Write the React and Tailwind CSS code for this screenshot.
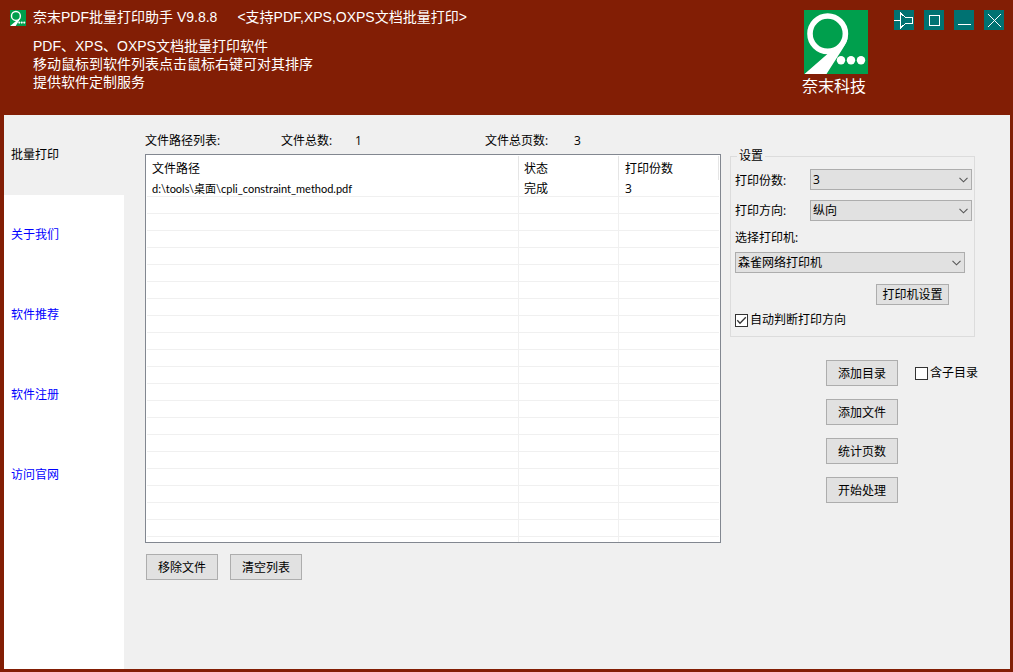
import React, { useState } from 'react';

const navItems = ['批量打印', '关于我们', '软件推荐', '软件注册', '访问官网'];

const files = [
  { path: 'd:\\tools\\桌面\\cpli_constraint_method.pdf', status: '完成', copies: 3 },
];

const ROW_COUNT = 21;

function Logo({ className }) {
  return (
    <svg className={className} viewBox="0 0 64 64" aria-hidden="true">
      <rect width="64" height="64" fill="#009f4d" />
      <circle cx="23.7" cy="23.7" r="17.7" fill="none" stroke="#fff" strokeWidth="5.6" />
      <path d="M0.5 64L24 43.5L35 38L43.8 28C42 34 38 40 34 46L22.5 64Z" fill="#fff" />
      <circle cx="37" cy="50.3" r="4.2" fill="#fff" />
      <circle cx="47" cy="50.3" r="4.2" fill="#fff" />
      <circle cx="57" cy="50.3" r="4.2" fill="#fff" />
    </svg>
  );
}

function WindowButton({ label, children }) {
  return (
    <button type="button" aria-label={label} className="h-5 w-5 bg-[#007272] hover:bg-[#008c8c]">
      <svg className="h-5 w-5" viewBox="0 0 20 20" fill="none" stroke="#fff" shapeRendering="crispEdges">
        {children}
      </svg>
    </button>
  );
}

function Button({ className = 'h-[26px] w-[72px]', children }) {
  return (
    <button type="button" className={`border border-[#adadad] bg-[#e1e1e1] pt-px hover:bg-[#e5f1fb] ${className}`}>
      {children}
    </button>
  );
}

function Select({ id, className, options, value, onChange }) {
  return (
    <div className={`grid items-center ${className}`}>
      <select
        id={id}
        value={value}
        onChange={e => onChange(e.target.value)}
        className="col-start-1 row-start-1 h-[21px] w-full appearance-none rounded-none border border-[#adadad] bg-[#e1e1e1] pt-px pl-[2px] pr-5 leading-4 outline-none"
      >
        {options.map(o => <option key={o} value={o}>{o}</option>)}
      </select>
      <svg className="pointer-events-none col-start-1 row-start-1 mr-1 h-[6px] w-[9px] justify-self-end" viewBox="0 0 9 6" fill="none" stroke="#555" strokeWidth="1.1">
        <path d="M0.5 0.8L4.5 4.8L8.5 0.8" />
      </svg>
    </div>
  );
}

function Checkbox({ label, checked, onChange }) {
  return (
    <label className="flex items-center gap-[2px] whitespace-nowrap leading-4">
      <span className="grid h-[13px] w-[13px] shrink-0">
        <input
          type="checkbox"
          checked={checked}
          onChange={e => onChange(e.target.checked)}
          className="peer col-start-1 row-start-1 h-[13px] w-[13px] appearance-none border border-[#333] bg-white"
        />
        <svg className="pointer-events-none invisible col-start-1 row-start-1 h-[13px] w-[13px] peer-checked:visible" viewBox="0 0 13 13" fill="none" stroke="#333" strokeWidth="1.3">
          <path d="M2.3 6.3L5 9.2L10.8 3.3" />
        </svg>
      </span>
      {label}
    </label>
  );
}

function FileTable() {
  const rows = Array.from({ length: ROW_COUNT }, (_, i) => files[i]);
  return (
    <div className="border border-[#828790] bg-white p-px pb-0">
      <table className="w-full table-fixed border-separate border-spacing-0">
        <colgroup>
          <col />
          <col className="w-[100px]" />
          <col className="w-[100px]" />
        </colgroup>
        <thead>
          <tr className="h-6 text-left">
            <th className="border-r border-[#e5e5e5] p-0 pt-0.5 pl-[5px] font-normal">文件路径</th>
            <th className="border-r border-[#e5e5e5] p-0 pt-0.5 pl-[5px] font-normal">状态</th>
            <th className="border-r border-[#e5e5e5] p-0 pt-0.5 pl-1.5 font-normal">打印份数</th>
          </tr>
        </thead>
        <tbody>
          {rows.map((file, idx) => (
            <tr key={idx} className="h-[17px] leading-[15px]">
              <td className="truncate border-r border-b border-[#f0f0f0] p-0 pt-px pl-[5px] font-['Lato','Noto_Sans_CJK_SC',sans-serif] text-[11px]">{file?.path}</td>
              <td className="border-r border-b border-[#f0f0f0] p-0 pt-px pl-[5px]">{file?.status}</td>
              <td className="border-b border-[#f0f0f0] p-0 pt-px pl-1.5">{file?.copies}</td>
            </tr>
          ))}
          <tr className="h-[5px]">
            <td className="border-r border-[#f0f0f0] p-0"></td>
            <td className="border-r border-[#f0f0f0] p-0"></td>
            <td className="p-0"></td>
          </tr>
        </tbody>
      </table>
    </div>
  );
}

export default function App() {
  const [active, setActive] = useState(navItems[0]);
  const [copies, setCopies] = useState('3');
  const [direction, setDirection] = useState('纵向');
  const [printer, setPrinter] = useState('森雀网络打印机');
  const [autoDirection, setAutoDirection] = useState(true);
  const [subfolders, setSubfolders] = useState(false);

  return (
    <div className="flex min-h-screen flex-col bg-[#821e05] pr-[3px] pb-[3px] pl-1 font-['Open_Sans','Noto_Sans_CJK_SC',sans-serif] text-xs text-black">
      <header className="flex h-[115px] items-start pt-2.5 pr-1.5 pl-1.5 font-['Liberation_Sans','Noto_Sans_CJK_SC',sans-serif] text-sm text-white">
        <Logo className="h-4 w-4 shrink-0" />
        <div className="ml-[7px] flex-1">
          <h1 className="flex gap-5 leading-[14px]">
            <span>奈末PDF批量打印助手 V9.8.8</span>
            <span>&lt;支持PDF,XPS,OXPS文档批量打印&gt;</span>
          </h1>
          <div className="mt-[13px] leading-[18px]">
            <p>PDF、XPS、OXPS文档批量打印软件</p>
            <p>移动鼠标到软件列表点击鼠标右键可对其排序</p>
            <p>提供软件定制服务</p>
          </div>
        </div>
        <div className="mr-[26px] flex w-[66px] flex-col items-end gap-[3px]">
          <Logo className="h-16 w-16" />
          <span className="self-start text-base leading-5">奈末科技</span>
        </div>
        <div className="flex gap-2.5">
          <WindowButton label="置顶">
            <path d="M0 10.5H6M6.5 2V19M7 3.5L11.5 7.5H18.5V13.5H11.5L7 17.5" />
          </WindowButton>
          <WindowButton label="最大化">
            <path d="M5.5 5.5H15.5V15.5H5.5Z" />
          </WindowButton>
          <WindowButton label="最小化">
            <path d="M4 14.5H17" />
          </WindowButton>
          <WindowButton label="关闭">
            <path d="M4 4L17 17M17 4L4 17" />
          </WindowButton>
        </div>
      </header>

      <div className="flex flex-1 bg-[#f0f0f0]">
        <nav className="w-[120px] shrink-0 bg-white">
          {navItems.map(item => (
            <a
              key={item}
              href="#"
              onClick={() => setActive(item)}
              className={`flex h-20 items-center pl-[7px] ${item === active ? 'bg-[#f0f0f0] text-black' : 'text-[#0000ff]'}`}
            >
              {item}
            </a>
          ))}
        </nav>

        <main className="flex flex-1 items-start gap-[9px] pr-[31px] pl-[21px]">
          <section className="min-w-0 flex-1">
            <div className="flex h-[39px] items-end pb-[5px] leading-4">
              <span className="w-[136px]">文件路径列表:</span>
              <span className="w-[74px]">文件总数:</span>
              <span className="w-[130px]">1</span>
              <span className="w-[89px]">文件总页数:</span>
              <span>3</span>
            </div>
            <FileTable />
            <div className="mt-[11px] flex gap-3 pl-px">
              <Button>移除文件</Button>
              <Button>清空列表</Button>
            </div>
          </section>

          <section className="w-[249px] shrink-0 pt-[33px]">
            <fieldset className="mr-1 border border-[#dcdcdc] pr-[2px] pb-2 pl-1">
              <legend className="ml-[2px] px-[2px] leading-4">设置</legend>
              <div className="flex items-center justify-between pt-[5px]">
                <label htmlFor="copies" className="pt-0.5">打印份数:</label>
                <Select id="copies" className="w-[162px]" options={['1', '2', '3', '4', '5']} value={copies} onChange={setCopies} />
              </div>
              <div className="mt-2.5 flex items-center justify-between">
                <label htmlFor="direction">打印方向:</label>
                <Select id="direction" className="w-[162px]" options={['纵向', '横向']} value={direction} onChange={setDirection} />
              </div>
              <label htmlFor="printer" className="mt-[9px] block leading-4">选择打印机:</label>
              <Select id="printer" className="mt-1.5 w-[230px]" options={['森雀网络打印机']} value={printer} onChange={setPrinter} />
              <div className="mt-[11px] mr-[23px] flex justify-end">
                <Button className="h-[21px] w-[73px]">打印机设置</Button>
              </div>
              <div className="mt-[7px]">
                <Checkbox label="自动判断打印方向" checked={autoDirection} onChange={setAutoDirection} />
              </div>
            </fieldset>

            <div className="mt-[23px] flex flex-col gap-[13px] pl-24">
              <div className="flex items-center gap-[17px]">
                <Button>添加目录</Button>
                <Checkbox label="含子目录" checked={subfolders} onChange={setSubfolders} />
              </div>
              <Button>添加文件</Button>
              <Button>统计页数</Button>
              <Button>开始处理</Button>
            </div>
          </section>
        </main>
      </div>
    </div>
  );
}
